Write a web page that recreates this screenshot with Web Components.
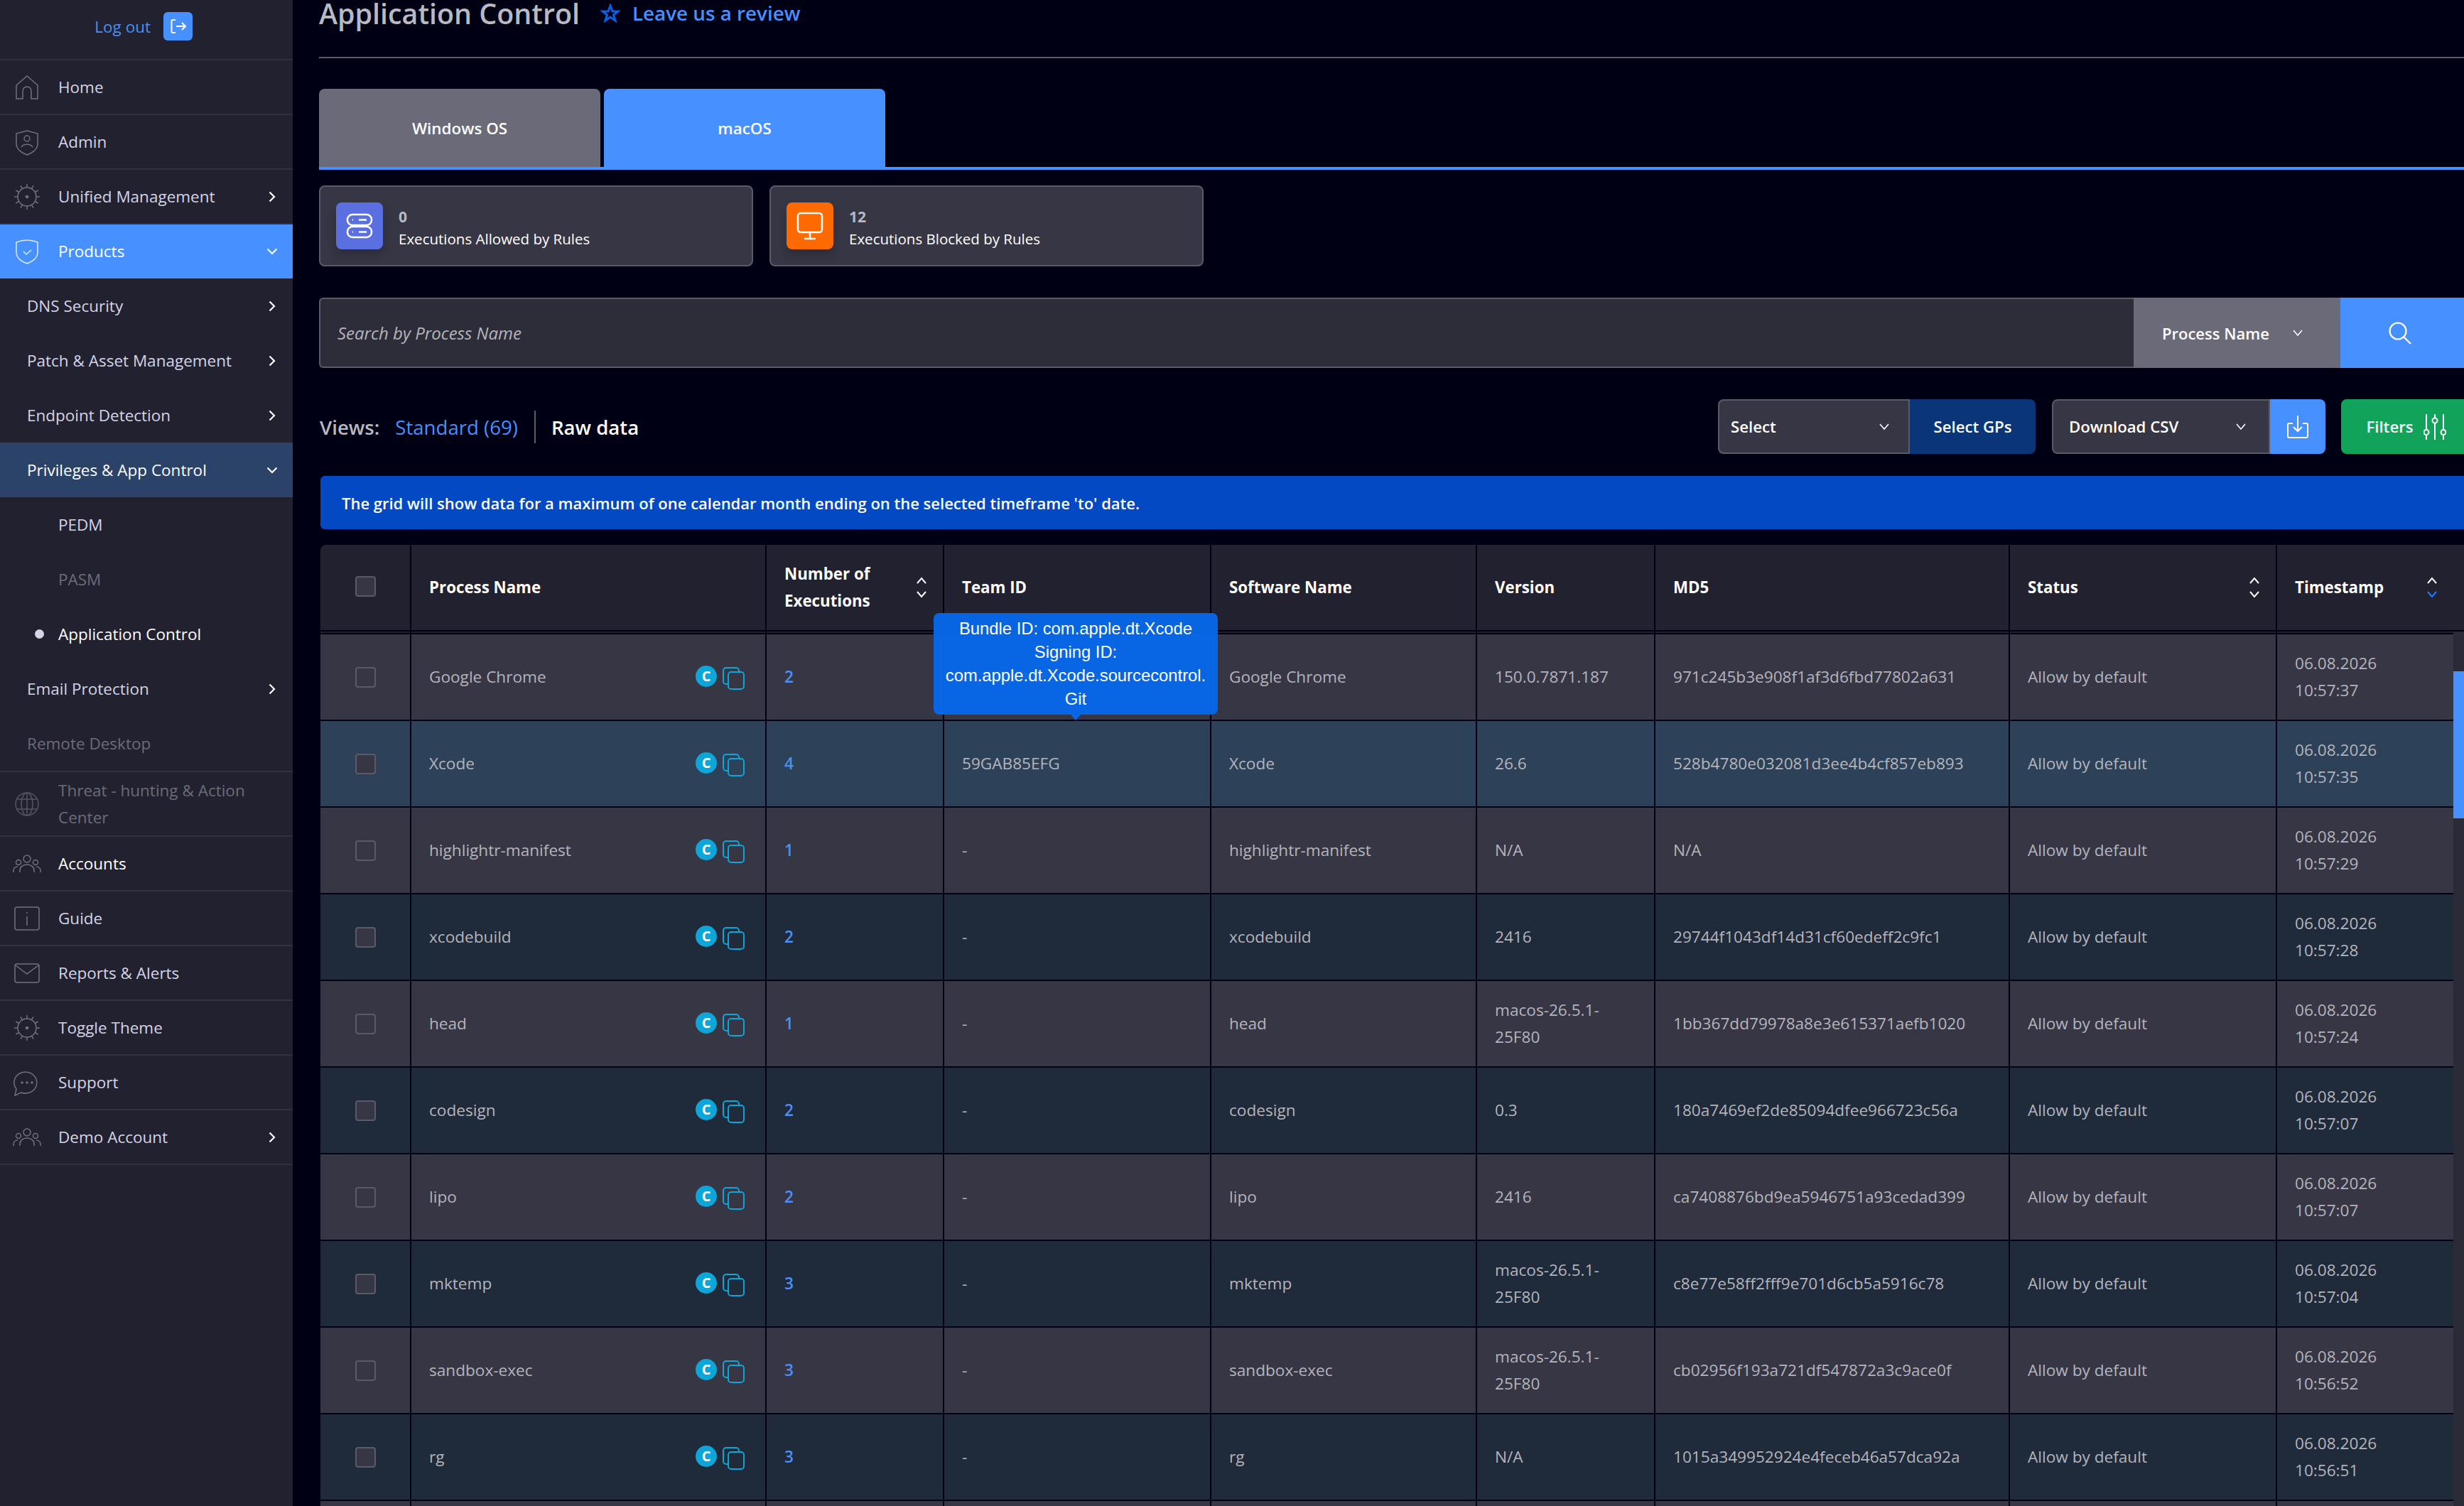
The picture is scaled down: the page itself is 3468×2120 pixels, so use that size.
<!DOCTYPE html>
<html lang="en">
<head>
<meta charset="utf-8">
<title>Application Control</title>
<style>
    html, body { margin: 0; height: 2120px; overflow: hidden; background: #000014; }
    body { display: flex; font-family: "Open Sans", "Liberation Sans", sans-serif; }
</style>
</head>
<body>
<app-sidebar></app-sidebar>
<main-view></main-view>

<script>
const sunTicks = Array.from({ length: 12 }, (_, i) => {
    const a = i * Math.PI / 6;
    const p = r => `${(18 + r * Math.cos(a)).toFixed(1)} ${(18 + r * Math.sin(a)).toFixed(1)}`;
    return `M${p(13)}L${p(18)}`;
}).join('');

const peopleIcon = `<circle cx="20" cy="6" r="5"/><circle cx="8" cy="11" r="3.5"/><circle cx="32" cy="11" r="3.5"/><path d="M10 25v-3a10 8 0 0 1 20 0v3M1 25v-3a6 6 0 0 1 6-5M39 25v-3a6 6 0 0 0-6-5"/>`;
const ICONS = {
    home: `<path d="M3 34V15L18 2l15 13v19H24V23a6 6 0 0 0-12 0v11z"/>`,
    admin: `<path d="M18 2l15 4v14c0 8-7 13-15 16C10 33 3 28 3 20V6z"/><circle cx="18" cy="13" r="4"/><path d="M10 25c3-5 13-5 16 0"/>`,
    sun: `<circle cx="18" cy="18" r="13"/><circle cx="18" cy="18" r="1.6" fill="currentColor"/><path d="${sunTicks}"/>`,
    shield: `<path d="M18 2c5 0 10 1 15 3v14c0 8-7 13-15 16C10 32 3 27 3 19V5c5-2 10-3 15-3z"/><path d="M13 18l4 4 7-6"/>`,
    globe: `<circle cx="18" cy="18" r="16"/><ellipse cx="18" cy="18" rx="8" ry="16"/><path d="M4 11h28M4 25h28M18 2v32"/>`,
    people: peopleIcon,
    info: `<rect x="1" y="2" width="34" height="32" rx="3"/><path d="M18 15v13M18 9v2"/>`,
    mail: `<rect x="1" y="5" width="34" height="26" rx="3"/><path d="M2 7l16 12L34 7"/>`,
    chat: `<path d="M1 36l2-9A16 15 0 1 1 10 32z"/><circle cx="11" cy="18" r="1" fill="currentColor"/><circle cx="18" cy="18" r="1" fill="currentColor"/><circle cx="25" cy="18" r="1" fill="currentColor"/>`
};

class NavItem extends HTMLElement {
    connectedCallback() {
        const icon = this.getAttribute('icon');
        const chevron = this.getAttribute('chevron');
        const wide = icon === 'people';
        const chevronSvg = chevron === 'right'
            ? `<svg class="chev" width="10" height="16" viewBox="0 0 10 16"><path d="M1.5 1.5L8 8l-6.500 6.500"/></svg>`
            : chevron === 'down'
                ? `<svg class="chev down" width="16" height="10" viewBox="0 0 16 10"><path d="M1.500 1.500L8 8l6.500-6.500"/></svg>`
                : '';
        this.shadowRoot || this.attachShadow({ mode: 'open' });
        this.shadowRoot.innerHTML = `
            <style>
                :host {
                    display: flex;
                    align-items: center;
                    box-sizing: border-box;
                    height: var(--h, 77px);
                    color: #d4d4e6;
                    font-size: 22.500px;
                    line-height: 38px;
                }
                :host([line]) { border-bottom: 2px solid #32323f; }
                :host([state="active"]) { background: #4691ff; color: #fff; }
                :host([state="open"]) { background: #2b4369; color: #fff; }
                :host([state="current"]) { color: #fff; }
                :host([state="off"]) { color: #6c6c78; }
                .ico {
                    flex: none;
                    width: 36px;
                    margin-left: 20px;
                    margin-right: 26px;
                    display: flex;
                    justify-content: center;
                    color: #71717c;
                }
                :host([state="active"]) .ico { color: #dce8fb; }
                :host([state="off"]) .ico { color: #565662; }
                .ico svg { fill: none; stroke: currentColor; stroke-width: 1.500; overflow: visible; }
                .label { flex: 1; }
                .sub { padding-left: 38px; }
                .subsub { padding-left: 82px; position: relative; }
                .dot {
                    position: absolute;
                    left: 49px;
                    top: 12px;
                    width: 13px;
                    height: 13px;
                    border-radius: 50%;
                    background: #d4d4e6;
                }
                .chev { flex: none; margin-right: 24px; fill: none; stroke: #fff; stroke-width: 2.200; }
                .chev.down { margin-right: 21px; }
            </style>
            ${icon ? `<span class="ico"><svg width="${wide ? 40 : 36}" height="${wide ? 26 : 36}" viewBox="0 0 ${wide ? 40 : 36} ${wide ? 26 : 36}">${ICONS[icon]}</svg></span>` : ''}
            <span class="label ${this.hasAttribute('subsub') ? 'subsub' : icon ? '' : 'sub'}">${this.hasAttribute('dot') ? '<span class="dot"></span>' : ''}<slot></slot></span>
            ${chevronSvg}
        `;
    }
}
customElements.define('nav-item', NavItem);

class AppSidebar extends HTMLElement {
    constructor() {
        super();
        this.attachShadow({ mode: 'open' });
        this.shadowRoot.innerHTML = `
            <style>
                :host {
                    display: block;
                    flex: none;
                    width: 412px;
                    height: 2120px;
                    background: #212130;
                }
                .logout {
                    display: flex;
                    align-items: center;
                    justify-content: flex-end;
                    box-sizing: border-box;
                    height: 85px;
                    padding: 0 141px 9px 0;
                    gap: 18px;
                    border-bottom: 2px solid #32323f;
                    color: #4a90f5;
                    font-size: 22.500px;
                }
                .btn {
                    width: 41px;
                    height: 40px;
                    border-radius: 6px;
                    background: #4691ff;
                    display: flex;
                    align-items: center;
                    justify-content: center;
                }
            </style>
            <div class="logout">
                <span>Log out</span>
                <span class="btn"><svg width="24" height="24" viewBox="0 0 24 24" fill="none" stroke="#fff" stroke-width="2"><path d="M8 3H4a1.500 1.500 0 0 0-1.500 1.500v15A1.500 1.500 0 0 0 4 21h4M9 12h13M17 7l5 5-5 5"/></svg></span>
            </div>
            <nav-item line icon="home">Home</nav-item>
            <nav-item line icon="admin">Admin</nav-item>
            <nav-item line icon="sun" chevron="right">Unified Management</nav-item>
            <nav-item icon="shield" chevron="down" state="active" style="--h:76px">Products</nav-item>
            <nav-item chevron="right">DNS Security</nav-item>
            <nav-item chevron="right">Patch &amp; Asset Management</nav-item>
            <nav-item chevron="right">Endpoint Detection</nav-item>
            <nav-item chevron="down" state="open">Privileges &amp; App Control</nav-item>
            <nav-item subsub>PEDM</nav-item>
            <nav-item subsub state="off">PASM</nav-item>
            <nav-item subsub dot state="current">Application Control</nav-item>
            <nav-item chevron="right">Email Protection</nav-item>
            <nav-item line state="off" style="--h:79px">Remote Desktop</nav-item>
            <nav-item line icon="globe" state="off" style="--h:91px">Threat - hunting &amp; Action Center</nav-item>
            <nav-item line icon="people" state="current">Accounts</nav-item>
            <nav-item line icon="info">Guide</nav-item>
            <nav-item line icon="mail">Reports &amp; Alerts</nav-item>
            <nav-item line icon="sun">Toggle Theme</nav-item>
            <nav-item line icon="chat">Support</nav-item>
            <nav-item line icon="people" chevron="right">Demo Account</nav-item>
        `;
    }
}
customElements.define('app-sidebar', AppSidebar);

class PageHeader extends HTMLElement {
    constructor() {
        super();
        this.attachShadow({ mode: 'open' });
        this.shadowRoot.innerHTML = `
            <style>
                :host {
                    display: flex;
                    align-items: flex-start;
                    height: 82px;
                    box-sizing: border-box;
                    border-bottom: 2px solid #5c5c69;
                }
                h1 { margin: 0; font-size: 39.400px; line-height: 38px; font-weight: 600; color: #b9b9c2; }
                svg { margin: 5px 17px 0 29px; }
                a { color: #4691ff; font-size: 27.800px; line-height: 36px; font-weight: 600; }
            </style>
            <h1>Application Control</h1>
            <svg width="28" height="27" viewBox="0 0 28 27" fill="none" stroke="#0b5fe0" stroke-width="3"><path d="M14 3l3 8h8l-6.500 5 2.500 8-7-5-7 5 2.500-8L3 11h8z"/></svg>
            <a>Leave us a review</a>
        `;
    }
}
customElements.define('page-header', PageHeader);

class OsTabs extends HTMLElement {
    constructor() {
        super();
        this.attachShadow({ mode: 'open' });
        this.shadowRoot.innerHTML = `
            <style>
                :host {
                    display: flex;
                    gap: 5px;
                    margin-top: 43px;
                    border-bottom: 4px solid #4691ff;
                }
                div {
                    width: 396px;
                    height: 110px;
                    border-radius: 8px 8px 0 0;
                    background: #6a6a78;
                    color: #fff;
                    font-size: 22.400px;
                    font-weight: 600;
                    display: flex;
                    align-items: center;
                    justify-content: center;
                }
                .on { background: #4691ff; }
            </style>
            <div>Windows OS</div>
            <div class="on">macOS</div>
        `;
    }
}
customElements.define('os-tabs', OsTabs);

class StatCard extends HTMLElement {
    connectedCallback() {
        const blocked = this.getAttribute('tone') === 'orange';
        this.attachShadow({ mode: 'open' }).innerHTML = `
            <style>
                :host {
                    display: flex;
                    align-items: center;
                    box-sizing: border-box;
                    width: 611px;
                    height: 114px;
                    padding-left: 22px;
                    background: #373645;
                    border: 2px solid #5a5a68;
                    border-radius: 8px;
                }
                .icon {
                    flex: none;
                    width: 66px;
                    height: 66px;
                    border-radius: 8px;
                    background: ${blocked ? '#ff6a00' : '#5a6fe0'};
                    box-shadow: 0 8px 14px rgba(0, 0, 0, .2);
                    display: flex;
                    align-items: center;
                    justify-content: center;
                    margin-right: 22px;
                }
                svg { fill: none; stroke: #fff; stroke-width: 2.500; }
                .text { padding-top: 3px; }
                .num { font-size: 21px; line-height: 32px; font-weight: 700; color: #b9b9c2; }
                .txt { font-size: 20.500px; line-height: 30px; color: #fff; }
            </style>
            <span class="icon">${blocked
                ? `<svg width="38" height="40" viewBox="0 0 38 40"><rect x="2" y="2" width="34" height="27" rx="4"/><path d="M19 29v8M11 38h16"/></svg>`
                : `<svg width="38" height="36" viewBox="0 0 38 36"><rect x="2" y="2" width="34" height="15" rx="7"/><rect x="2" y="19" width="34" height="15" rx="7"/><path d="M9 9.500h1M18 9.500h11M9 26.500h1M18 26.500h11"/></svg>`
            }</span>
            <span class="text"><div class="num">${this.getAttribute('value')}</div><div class="txt"><slot></slot></div></span>
        `;
    }
}
customElements.define('stat-card', StatCard);

class SearchBar extends HTMLElement {
    constructor() {
        super();
        this.attachShadow({ mode: 'open' });
        this.shadowRoot.innerHTML = `
            <style>
                :host { display: flex; height: 99px; margin-top: 44px; color: #fff; font-size: 22px; }
                .field {
                    flex: 1;
                    box-sizing: border-box;
                    display: flex;
                    align-items: center;
                    padding-left: 24px;
                    background: #2d2d39;
                    border: solid #5a5a68;
                    border-width: 2px 0 2px 2px;
                    border-radius: 6px 0 0 6px;
                    font-style: italic;
                    font-size: 24px;
                    color: #b4b4bc;
                }
                .kind {
                    width: 291px;
                    box-sizing: border-box;
                    padding-left: 40px;
                    background: #6a6a78;
                    display: flex;
                    align-items: center;
                    font-weight: 600;
                }
                .kind svg { margin-left: 32px; fill: none; stroke: #fff; stroke-width: 1.600; }
                .go {
                    width: 174px;
                    background: #4691ff;
                    display: flex;
                    align-items: center;
                    justify-content: center;
                    padding-right: 6px;
                    box-sizing: border-box;
                }
            </style>
            <div class="field">Search by Process Name</div>
            <div class="kind">Process Name<svg width="16" height="10" viewBox="0 0 16 10"><path d="M2 1l6 7 6-7"/></svg></div>
            <div class="go"><svg width="34" height="34" viewBox="0 0 34 34" fill="none" stroke="#fff" stroke-width="2.200"><circle cx="14" cy="14" r="11.500"/><path d="M22 22l10 10"/></svg></div>
        `;
    }
}
customElements.define('search-bar', SearchBar);

class ViewsBar extends HTMLElement {
    constructor() {
        super();
        this.attachShadow({ mode: 'open' });
        this.shadowRoot.innerHTML = `
            <style>
                :host {
                    display: flex;
                    align-items: stretch;
                    height: 77px;
                    margin-top: 44px;
                    color: #fff;
                    font-size: 22.200px;
                    font-weight: 600;
                }
                .views { display: flex; align-items: center; font-size: 27.600px; flex: 1; padding-left: 1px; }
                .views b { font-weight: 600; color: #b9b9c2; margin-right: 22px; }
                .views a { color: #4691ff; font-weight: 500; padding-right: 23px; border-right: 2px solid #5c5c69; line-height: 46px; margin-right: 22px; }
                .box {
                    box-sizing: border-box;
                    background: #373645;
                    border: 2px solid #5a5a68;
                    border-radius: 8px 0 0 8px;
                    display: flex;
                    align-items: center;
                    justify-content: space-between;
                }
                .box svg { fill: none; stroke: #fff; stroke-width: 1.600; }
                .gps {
                    width: 177px;
                    background: #0a3578;
                    border-radius: 0 8px 8px 0;
                    display: flex;
                    align-items: center;
                    justify-content: center;
                }
                .dl {
                    width: 78px;
                    background: #4691ff;
                    border-radius: 0 8px 8px 0;
                    display: flex;
                    align-items: center;
                    justify-content: center;
                }
                .filters {
                    width: 173px;
                    margin-left: 22px;
                    background: #12a35b;
                    border-radius: 8px 0 0 8px;
                    display: flex;
                    align-items: center;
                    justify-content: center;
                    gap: 14px;
                    box-sizing: border-box;
                    padding-left: 10px;
                }
            </style>
            <div class="views"><b>Views:</b><a>Standard (69)</a><span>Raw data</span></div>
            <div class="box" style="width:270px;padding:0 26px 0 16px">Select<svg width="16" height="10" viewBox="0 0 16 10"><path d="M2 1l6 7 6-7"/></svg></div>
            <div class="gps">Select GPs</div>
            <div class="box" style="width:307px;margin-left:23px;padding:0 31px 0 22px">Download CSV<svg width="16" height="10" viewBox="0 0 16 10"><path d="M2 1l6 7 6-7"/></svg></div>
            <div class="dl"><svg width="32" height="34" viewBox="0 0 32 34" fill="none" stroke="#fff" stroke-width="2"><path d="M16 1v22M10 17l6 6 6-6M9 12H4a2 2 0 0 0-2 2v16a2 2 0 0 0 2 2h24a2 2 0 0 0 2-2V14a2 2 0 0 0-2-2h-5"/></svg></div>
            <div class="filters">Filters<svg width="32" height="36" viewBox="0 0 32 36" fill="none" stroke="#fff" stroke-width="2"><path d="M4 0v22M4 29v7M16 0v5M16 13v23M28 0v22M28 29v7"/><circle cx="4" cy="25.500" r="3.500"/><circle cx="16" cy="9" r="3.500"/><circle cx="28" cy="25.500" r="3.500"/></svg></div>
        `;
    }
}
customElements.define('views-bar', ViewsBar);

class InfoBanner extends HTMLElement {
    constructor() {
        super();
        this.attachShadow({ mode: 'open' });
        this.shadowRoot.innerHTML = `
            <style>
                :host {
                    display: flex;
                    align-items: center;
                    height: 75px;
                    margin: 31px 0 0 2px;
                    padding-left: 30px;
                    border-radius: 6px 0 0 6px;
                    background: #0349c3;
                    color: #fff;
                    font-size: 22px;
                    font-weight: 600;
                }
            </style>
            <slot></slot>
        `;
    }
}
customElements.define('info-banner', InfoBanner);

const GRID_COLS = '126px 498px 248px 374px 372px 249px 497px 374px 1fr';

class SortArrows extends HTMLElement {
    connectedCallback() {
        const down = this.getAttribute('active') === 'down' ? '#1f7dff' : '#fff';
        this.attachShadow({ mode: 'open' }).innerHTML = `
            <style>:host { display: block; flex: none; line-height: 0; } svg { fill: none; stroke-width: 2; }</style>
            <svg width="16" height="30" viewBox="0 0 16 30"><path d="M2 9l6-7 6 7" stroke="#fff"/><path d="M2 21l6 7 6-7" stroke="${down}"/></svg>
        `;
    }
}
customElements.define('sort-arrows', SortArrows);

class GridHead extends HTMLElement {
    constructor() {
        super();
        this.attachShadow({ mode: 'open' });
        this.shadowRoot.innerHTML = `
            <style>
                :host {
                    display: grid;
                    grid-template-columns: ${GRID_COLS};
                    column-gap: 2px;
                    height: 120px;
                    color: #fff;
                    font-size: 22.300px;
                    font-weight: 700;
                    line-height: 38px;
                }
                div { background: #212130; display: flex; align-items: center; justify-content: space-between; padding: 0 25px; }
                div.check { border-radius: 8px 0 0 0; justify-content: flex-start; padding: 0 0 4px 49px; }
                i { display: block; width: 25px; height: 25px; background: #373645; border: 2px solid #5a5a68; border-radius: 4px; }
                sort-arrows { margin: 0 -3px 0 0; }
            </style>
            <div class="check"><i></i></div>
            <div>Process Name</div>
            <div><span>Number of<br>Executions</span><sort-arrows></sort-arrows></div>
            <div>Team ID</div>
            <div>Software Name</div>
            <div>Version</div>
            <div>MD5</div>
            <div>Status<sort-arrows></sort-arrows></div>
            <div style="padding-right:28px">Timestamp<sort-arrows active="down" style="margin:0 9px 0 0"></sort-arrows></div>
        `;
    }
}
customElements.define('grid-head', GridHead);

class GridRow extends HTMLElement {
    connectedCallback() {
        const [name, count, team, version, md5, date, time] = (this.getAttribute('cells') || '').split('|');
        const tone = this.getAttribute('tone');
        const bg = tone === 'hover' ? '#2d4258' : tone === 'dark' ? '#1f2a3a' : '#373645';
        const spacer = this.hasAttribute('spacer');
        this.attachShadow({ mode: 'open' }).innerHTML = `
            <style>
                :host {
                    display: grid;
                    grid-template-columns: ${GRID_COLS};
                    column-gap: 2px;
                    height: ${spacer ? 8 : 120}px;
                    color: #b4b4bc;
                    font-size: 22.600px;
                    line-height: 38px;
                }
                div { background: ${bg}; display: flex; align-items: center; padding: 0 25px; overflow: hidden; }
                div.check { padding: 0 0 0 49px; }
                i { display: block; width: 25px; height: 25px; background: #373645; border: 2px solid #5a5a68; border-radius: 4px; }
                .name { justify-content: space-between; padding-right: 29px; }
                .tools { display: flex; align-items: flex-start; gap: 8px; margin-top: 1px; }
                .c {
                    width: 30px;
                    height: 30px;
                    border-radius: 50%;
                    background: #0ea5d9;
                    color: #fff;
                    font-size: 20px;
                    line-height: 29px;
                    font-weight: 700;
                    text-align: center;
                }
                .count { color: #4a90f5; font-weight: 600; }
            </style>
            ${spacer
                ? '<div></div>'.repeat(9)
                : `<div class="check"><i></i></div>
                   <div class="name"><span>${name}</span><span class="tools"><span class="c">C</span><svg width="31" height="32" viewBox="0 0 31 32" fill="none" stroke="#0ea5d9" stroke-width="2" style="margin-top:2px"><path d="M7 24H5a4 4 0 0 1-4-4V5a4 4 0 0 1 4-4h14a4 4 0 0 1 4 4v2"/><rect x="8" y="7" width="22" height="24" rx="4"/></svg></span></div>
                   <div class="count">${count}</div>
                   <div>${team}</div>
                   <div>${name}</div>
                   <div>${version}</div>
                   <div>${md5}</div>
                   <div>Allow by default</div>
                   <div>${date}<br>${time}</div>`}
        `;
    }
}
customElements.define('grid-row', GridRow);

const ROWS = [
    ['Google Chrome', 2, 'EQHXZ8M8AV', '150.0.7871.187', '971c245b3e908f1af3d6fbd77802a631', '10:57:37'],
    ['Xcode', 4, '59GAB85EFG', '26.6', '528b4780e032081d3ee4b4cf857eb893', '10:57:35'],
    ['highlightr-manifest', 1, '-', 'N/A', 'N/A', '10:57:29'],
    ['xcodebuild', 2, '-', '2416', '29744f1043df14d31cf60edeff2c9fc1', '10:57:28'],
    ['head', 1, '-', 'macos-26.5.1-<br>25F80', '1bb367dd79978a8e3e615371aefb1020', '10:57:24'],
    ['codesign', 2, '-', '0.3', '180a7469ef2de85094dfee966723c56a', '10:57:07'],
    ['lipo', 2, '-', '2416', 'ca7408876bd9ea5946751a93cedad399', '10:57:07'],
    ['mktemp', 3, '-', 'macos-26.5.1-<br>25F80', 'c8e77e58ff2fff9e701d6cb5a5916c78', '10:57:04'],
    ['sandbox-exec', 3, '-', 'macos-26.5.1-<br>25F80', 'cb02956f193a721df547872a3c9ace0f', '10:56:52'],
    ['rg', 3, '-', 'N/A', '1015a349952924e4feceb46a57dca92a', '10:56:51']
];

class DataGrid extends HTMLElement {
    constructor() {
        super();
        this.attachShadow({ mode: 'open' });
        const rows = ROWS.map((r, i) => {
            const tone = i === 1 ? 'hover' : i % 2 ? 'dark' : 'plain';
            const cells = [r[0], r[1], r[2], r[3], r[4], '06.08.2026', r[5]].join('|');
            return `<grid-row tone="${tone}" cells="${cells}"></grid-row>`;
        }).join('');
        this.shadowRoot.innerHTML = `
            <style>
                :host {
                    display: flex;
                    flex-direction: column;
                    gap: 2px;
                    position: relative;
                    margin: 22px 0 0 2px;
                }
                .band {
                    display: grid;
                    grid-template-columns: ${GRID_COLS};
                    column-gap: 2px;
                    height: 2px;
                    flex: none;
                }
                .band span { background: #212130; }
                .track { position: absolute; right: 0; top: 122px; bottom: 0; width: 15px; background: #2b2b38; }
                .thumb { position: absolute; left: 0; right: 0; top: 56px; height: 207px; background: #4691ff; }
                .tip {
                    position: absolute;
                    left: 863px;
                    top: 96px;
                    width: 400px;
                    height: 143px;
                    box-sizing: border-box;
                    padding-top: 5px;
                    border-radius: 8px;
                    background: rgba(7, 103, 232, .97);
                    color: #fff;
                    font: 23.800px/33px "Liberation Sans", Arial, sans-serif;
                    text-align: center;
                }
                .tip::after {
                    content: "";
                    position: absolute;
                    left: 193px;
                    top: 100%;
                    border: 7px solid transparent;
                    border-top: 8px solid #0767e8;
                    border-bottom: 0;
                }
            </style>
            <grid-head></grid-head>
            <div class="band">${'<span></span>'.repeat(9)}</div>
            ${rows}
            <grid-row spacer tone="plain"></grid-row>
            <div class="track"><div class="thumb"></div></div>
            <div class="tip">Bundle ID: com.apple.dt.Xcode<br>Signing ID:<br>com.apple.dt.Xcode.sourcecontrol.<br>Git</div>
        `;
    }
}
customElements.define('data-grid', DataGrid);

class MainView extends HTMLElement {
    constructor() {
        super();
        this.attachShadow({ mode: 'open' });
        this.shadowRoot.innerHTML = `
            <style>
                :host {
                    display: block;
                    flex: 1;
                    min-width: 0;
                    height: 2120px;
                    overflow: hidden;
                    padding-left: 37px;
                    color: #fff;
                }
                .cards { display: flex; gap: 23px; margin-top: 22px; }
            </style>
            <page-header></page-header>
            <os-tabs></os-tabs>
            <div class="cards">
                <stat-card value="0">Executions Allowed by Rules</stat-card>
                <stat-card value="12" tone="orange">Executions Blocked by Rules</stat-card>
            </div>
            <search-bar></search-bar>
            <views-bar></views-bar>
            <info-banner>The grid will show data for a maximum of one calendar month ending on the selected timeframe 'to' date.</info-banner>
            <data-grid></data-grid>
        `;
    }
}
customElements.define('main-view', MainView);
</script>
</body>
</html>
